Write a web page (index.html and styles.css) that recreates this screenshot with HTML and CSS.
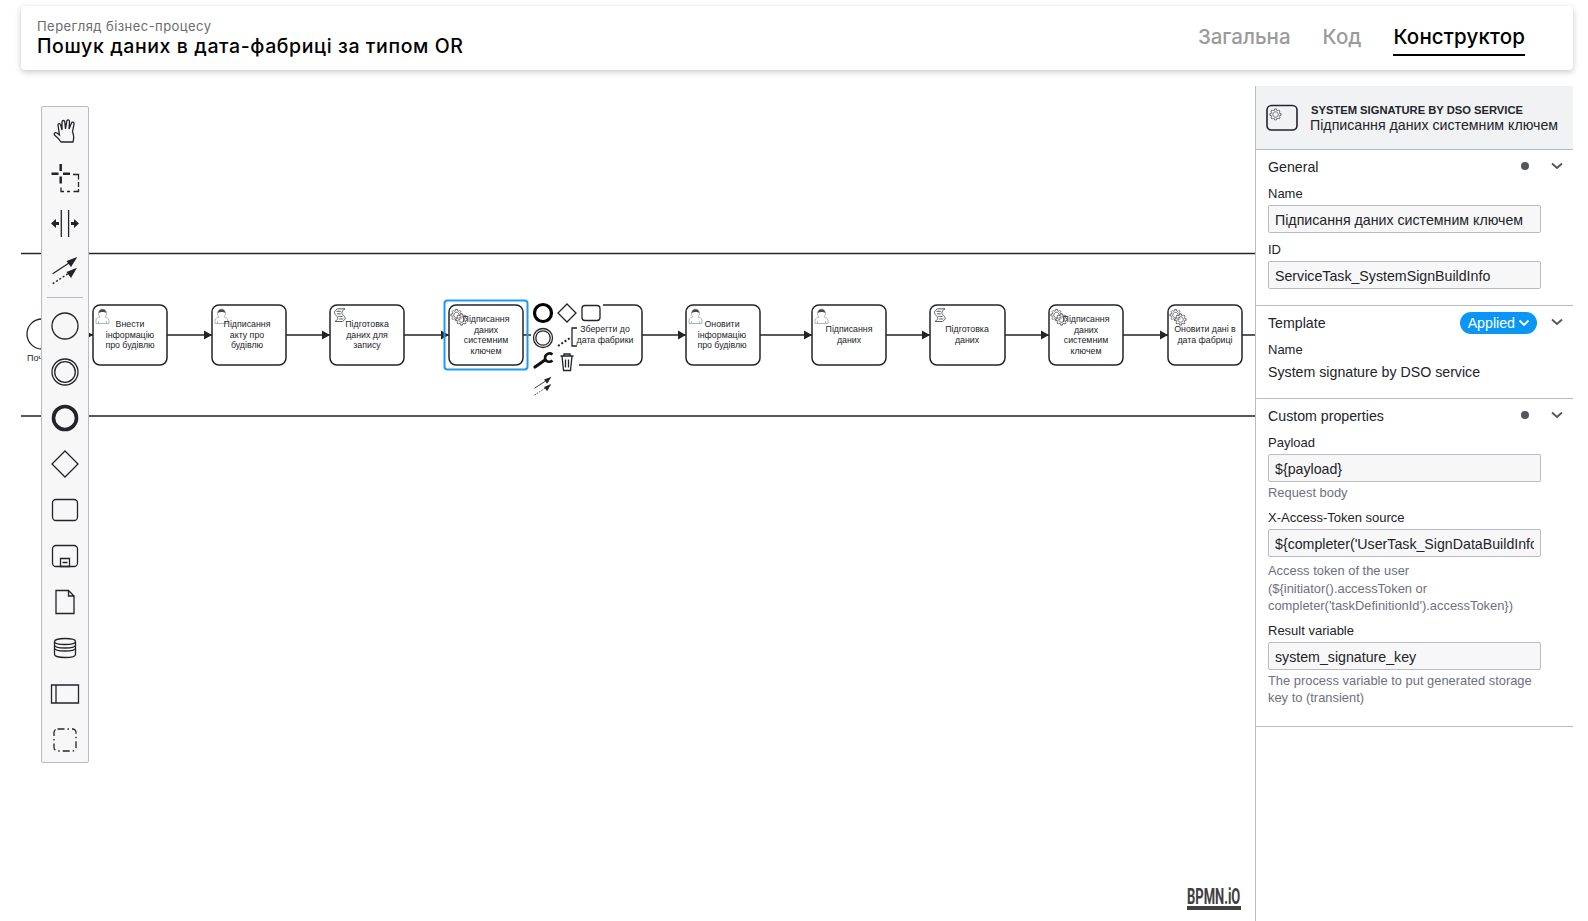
FILE: index.html
```
<!DOCTYPE html>
<html lang="uk">
<head>
  <meta charset="UTF-8">
  <title>Пошук даних в дата-фабриці за типом OR</title>
  <link rel="stylesheet" href="styles.css">
</head>
<body>
  <svg class="icon-defs">
    <symbol id="i-connect" viewBox="0 0 32 32">
      <path d="M3.7 20.7 20 10" fill="none" stroke="#22242a" stroke-width="1.300"/>
      <path d="M3.7 30.7l16-10.500" fill="none" stroke="#22242a" stroke-width="1.400" stroke-dasharray="2 2"/>
      <path d="M28.300 4 17.500 8l4.500 6zM28 14.700 17.500 19l4.500 6z" fill="#22242a"/>
    </symbol>
    <symbol id="i-user" viewBox="0 0 15 16">
      <path d="M1 15.500V12c0-1.800 2.600-2.600 4-3.200C3.800 7.800 3.400 6.300 3.500 5 3.700 2.500 5.400 1.200 7.500 1.200S11.300 2.500 11.500 5c.1 1.300-.3 2.800-1.500 3.800 1.400.6 4 1.400 4 3.200v3.500z" fill="#fff" stroke="#a9abb0" stroke-width=".9"/>
      <path d="M3.700 5C3.800 2.500 5.400 1.200 7.500 1.200S11.200 2.500 11.300 5C9.500 3.800 6 3.500 3.700 5z" fill="#45474d"/>
      <path d="M3.500 15.500V13M11.500 15.500V13" stroke="#a9abb0" stroke-width=".8"/>
    </symbol>
    <symbol id="i-script" viewBox="0 0 15 16">
      <g transform="translate(8.500 14.500) scale(.85)" fill="none" stroke="#55575d" stroke-width="1.150">
        <path d="M0 0c9.967-6.273-8.001-7.919 2.969-14.938h-8.803c-10.970 7.019 6.998 8.665-2.969 14.938z"/>
        <path d="M-7-12h5M-6.500-9h4.500M-5-6h5M-4-3h5"/>
      </g>
    </symbol>
    <symbol id="i-gear" viewBox="0 0 18 18">
      <path id="gear-path" d="M9.500 17.500v-1.713c.352-.071.704-.178 1.048-.321.344-.145.666-.321.966-.521l1.194 1.180 1.567-1.577-1.195-1.180c.403-.614.683-1.299.825-2.018l1.622-.010v-2.220l-1.637.010c-.073-.352-.178-.700-.323-1.044-.145-.344-.321-.664-.523-.962l1.131-1.136-1.583-1.563-1.130 1.136c-.614-.401-1.303-.681-2.023-.822l.009-1.619h-2.241l.004 1.631c-.354.074-.705.180-1.050.324-.344.144-.665.321-.964.520l-1.170-1.158-1.567 1.579 1.168 1.157c-.403.613-.683 1.298-.825 2.017l-1.659.003v2.222l1.673-.006c.073.351.180.702.324 1.045.145.344.321.664.523.961l-1.200 1.197 1.584 1.560 1.196-1.193c.614.403 1.303.682 2.023.823l.001 1.699h2.227zm.221-3.996c-1.789.750-3.858-.093-4.610-1.874-.752-1.783.091-3.846 1.880-4.596 1.788-.749 3.857.093 4.609 1.874.752 1.782-.091 3.846-1.879 4.596z" fill="#fff" stroke="#55575d" stroke-width="1.100"/>
    </symbol>
    <symbol id="i-gears" viewBox="0 0 24 22">
      <use href="#gear-path" transform="scale(.78)"/>
      <use href="#gear-path" transform="translate(5 4.500) scale(.78)"/>
    </symbol>
  </svg>

  <header class="page-head">
    <div class="page-title">
      <div class="page-title-sub">Перегляд бізнес-процесу</div>
      <div class="page-title-main">Пошук даних в дата-фабриці за типом OR</div>
    </div>
    <nav class="tabs">
      <a class="tab">Загальна</a>
      <a class="tab">Код</a>
      <a class="tab tab-active">Конструктор</a>
    </nav>
  </header>

  <main class="workspace">
    <div class="canvas">
      <svg class="diagram" width="1234" height="835" viewBox="21 86 1234 835">
        <g class="lane-lines">
          <path d="M21 253.500H1255M21 416H1255"/>
        </g>

        <circle class="shape" cx="42" cy="334" r="15"/>
        <text class="label-start" x="27" y="361">Початок</text>

        <g class="flows">
          <path d="M60 335H93M167 335H212M286 335H330M404 335H449M523 335H568M642 335H686M760 335H812M886 335H930M1005 335H1049M1123 335H1168M1242 335H1255"/>
        </g>
        <g class="heads">
          <path d="M93 335l-7-4v8zM212 335l-8-4.500v9zM330 335l-8-4.500v9zM449 335l-8-4.500v9zM686 335l-8-4.500v9zM812 335l-8-4.500v9zM930 335l-8-4.500v9zM1049 335l-8-4.500v9zM1168 335l-8-4.500v9z"/>
        </g>

        <rect class="task" x="93" y="305" width="74" height="60" rx="7"/>
        <use href="#i-user" x="95" y="308" width="15" height="16"/>
        <text class="task-text" x="130"><tspan x="130" y="327">Внести</tspan><tspan x="130" y="338">інформацію</tspan><tspan x="130" y="348">про будівлю</tspan></text>

        <rect class="task" x="212" y="305" width="74" height="60" rx="7"/>
        <use href="#i-user" x="214" y="308" width="15" height="16"/>
        <text class="task-text"><tspan x="247" y="327">Підписання</tspan><tspan x="247" y="338">акту про</tspan><tspan x="247" y="348">будівлю</tspan></text>

        <rect class="task" x="330" y="305" width="74" height="60" rx="7"/>
        <use href="#i-script" x="334" y="307" width="15" height="16"/>
        <text class="task-text"><tspan x="367" y="327">Підготовка</tspan><tspan x="367" y="338">даних для</tspan><tspan x="367" y="348">запису</tspan></text>

        <rect class="task" x="449" y="305" width="74" height="60" rx="7"/>
        <use href="#i-gears" x="450" y="307" width="24" height="22"/>
        <text class="task-text"><tspan x="486" y="322">Підписання</tspan><tspan x="486" y="333">даних</tspan><tspan x="486" y="343">системним</tspan><tspan x="486" y="354">ключем</tspan></text>
        <rect class="selection" x="444.500" y="300.500" width="83" height="69" rx="3"/>

        <rect class="task" x="568" y="305" width="74" height="60" rx="7"/>

        <!-- context pad of the selected task -->
        <g class="pad">
          <rect class="pad-bg" x="531" y="301" width="72" height="24"/>
          <rect class="pad-bg" x="531" y="325" width="48" height="72"/>
          <circle class="pad-thick" cx="543" cy="313" r="8.500"/>
          <path class="shape" d="M567 304l9 9-9 9-9-9z"/>
          <rect class="shape" x="582" y="305.500" width="18" height="15" rx="3"/>
          <circle class="shape" cx="543" cy="338" r="9.500"/>
          <circle class="shape" cx="543" cy="338" r="7.200"/>
          <path class="dots" d="M558 346l12-8"/>
          <path class="shape" d="M577 328h-5v18h5"/>
          <path class="wrench" d="M535 367l10-7"/>
          <path class="wrench-jaw" d="M552.500 354.500c-3-2.300-7.500-.5-7.500 3.500 0 3.500 4.500 5 7.500 2.500"/>
          <g class="shape">
            <path d="M560.500 356h13M564 356v-2h6v2M562 356l1.500 14.500h7l1.500-14.500M565.500 359.500v8M568.500 359.500v8"/>
          </g>
          <use href="#i-connect" x="532" y="374" width="22" height="22"/>
        </g>
        <text class="task-text"><tspan x="605" y="332">Зберегти до</tspan><tspan x="605" y="343">дата фабрики</tspan></text>

        <rect class="task" x="686" y="305" width="74" height="60" rx="7"/>
        <use href="#i-user" x="688" y="308" width="15" height="16"/>
        <text class="task-text"><tspan x="722" y="327">Оновити</tspan><tspan x="722" y="338">інформацію</tspan><tspan x="722" y="348">про будівлю</tspan></text>

        <rect class="task" x="812" y="305" width="74" height="60" rx="7"/>
        <use href="#i-user" x="814" y="308" width="15" height="16"/>
        <text class="task-text"><tspan x="849" y="332">Підписання</tspan><tspan x="849" y="343">даних</tspan></text>

        <rect class="task" x="930" y="305" width="75" height="60" rx="7"/>
        <use href="#i-script" x="934" y="307" width="15" height="16"/>
        <text class="task-text"><tspan x="967" y="332">Підготовка</tspan><tspan x="967" y="343">даних</tspan></text>

        <rect class="task" x="1049" y="305" width="74" height="60" rx="7"/>
        <use href="#i-gears" x="1050" y="307" width="24" height="22"/>
        <text class="task-text"><tspan x="1086" y="322">Підписання</tspan><tspan x="1086" y="333">даних</tspan><tspan x="1086" y="343">системним</tspan><tspan x="1086" y="354">ключем</tspan></text>

        <rect class="task" x="1168" y="305" width="74" height="60" rx="7"/>
        <use href="#i-gears" x="1169" y="307" width="24" height="22"/>
        <text class="task-text"><tspan x="1205" y="332">Оновити дані в</tspan><tspan x="1205" y="343">дата фабриці</tspan></text>
      </svg>

      <div class="palette">
        <div class="palette-entry">
          <svg viewBox="0 0 32 32"><path class="tool" d="M12 27C10 24 8 22 5.500 20 4.500 18.500 6 17 8 18l2.500 2L9 10c0-1.500 2-2 2.700 0l1.300 5V7c0-2 2.500-2 2.800 0l.7 7 1.300-8c.4-1.800 2.700-1.500 2.700.5l-.5 7.500 2.500-6c.5-1.500 2.700-1 2.500 1l-1.500 8c1 2 1.300 7 .5 10z"/></svg>
        </div>
        <div class="palette-entry">
          <svg viewBox="0 0 32 32"><path class="tool-bold" d="M2.500 12.700h7M14 12.700h7M11.700 3v7M11.700 15.500v7"/><path class="tool" d="M24 13.500h5.500v5M29.500 21v5M29.500 28v2.500h-5M21 30.500h-3M15 30.500h-3v-4"/></svg>
        </div>
        <div class="palette-entry">
          <svg viewBox="0 0 32 32"><path class="tool" d="M12.300 3v27M19.600 3v27"/><path class="tool-fill" d="M2 16.500l5-4.500v3h3v3H7v3zM30 16.500l-5-4.500v3h-3v3h3v3z"/></svg>
        </div>
        <div class="palette-entry">
          <svg><use href="#i-connect"/></svg>
        </div>
        <div class="palette-sep"></div>
        <div class="palette-entry">
          <svg viewBox="0 0 32 32"><circle class="tool" cx="16" cy="16" r="13"/></svg>
        </div>
        <div class="palette-entry">
          <svg viewBox="0 0 32 32"><circle class="tool" cx="16" cy="16" r="13"/><circle class="tool" cx="16" cy="16" r="10.300"/></svg>
        </div>
        <div class="palette-entry">
          <svg viewBox="0 0 32 32"><circle class="tool-thick" cx="16" cy="16" r="11.500"/></svg>
        </div>
        <div class="palette-entry">
          <svg viewBox="0 0 32 32"><path class="tool" d="M16 3l13 13-13 13L3 16z"/></svg>
        </div>
        <div class="palette-entry">
          <svg viewBox="0 0 32 32"><rect class="tool" x="3.500" y="5.500" width="25" height="21" rx="3.500"/></svg>
        </div>
        <div class="palette-entry">
          <svg viewBox="0 0 32 32"><rect class="tool" x="3.500" y="5.500" width="25" height="21" rx="3.500"/><path class="tool" d="M11.500 18.500h9v8h-9zM13.500 22.500h5"/></svg>
        </div>
        <div class="palette-entry">
          <svg viewBox="0 0 32 32"><path class="tool" d="M7 4.500h12.500L25 10v17.500H7zM19.500 4.500V10H25"/></svg>
        </div>
        <div class="palette-entry">
          <svg viewBox="0 0 32 32"><path class="tool" d="M5.500 9.500c0-4 21-4 21 0v13c0 4-21 4-21 0zM5.500 9.500c0 4 21 4 21 0M5.500 13c0 4 21 4 21 0M5.500 16c0 4 21 4 21 0"/></svg>
        </div>
        <div class="palette-entry">
          <svg viewBox="0 0 32 32"><path class="tool" d="M2.500 7h27v18h-27zM7 7v18"/></svg>
        </div>
        <div class="palette-entry">
          <svg viewBox="0 0 32 32"><rect class="tool-dash" x="5" y="5" width="22" height="22" rx="3.500"/></svg>
        </div>
      </div>

      <a class="powered-by">
        <svg width="54" height="29" viewBox="0 0 54 29">
          <text transform="translate(0 23) scale(.59 1)">BPMN.iO</text>
          <rect x="0" y="25" width="54" height="4"/>
        </svg>
      </a>
    </div>

    <aside class="props">
      <div class="props-head">
        <svg class="props-head-icon" width="32" height="27" viewBox="0 0 32 27">
          <rect x="1" y="1.500" width="30" height="24.500" rx="4.500" fill="none" stroke="#22242a" stroke-width="1.600"/>
          <use href="#i-gear" x="3" y="2.500" width="14" height="14"/>
        </svg>
        <div class="props-head-text">
          <div class="props-type">SYSTEM SIGNATURE BY DSO SERVICE</div>
          <div class="props-name">Підписання даних системним ключем</div>
        </div>
      </div>

      <section class="group">
        <div class="group-head">
          <span class="group-title">General</span>
          <span class="group-dot"></span>
          <svg class="chevron" width="16" height="16" viewBox="0 0 16 16"><path d="M3 5.500l5 4.500 5-4.500"/></svg>
        </div>
        <div class="field">
          <label class="field-label">Name</label>
          <input class="field-input" type="text" value="Підписання даних системним ключем">
        </div>
        <div class="field">
          <label class="field-label">ID</label>
          <input class="field-input" type="text" value="ServiceTask_SystemSignBuildInfo">
        </div>
      </section>

      <section class="group">
        <div class="group-head">
          <span class="group-title">Template</span>
          <span class="pill">Applied
            <svg width="12" height="10" viewBox="0 0 12 10"><path d="M1.500 2.500l4.500 4.500 4.500-4.500"/></svg>
          </span>
          <svg class="chevron" width="16" height="16" viewBox="0 0 16 16"><path d="M3 5.500l5 4.500 5-4.500"/></svg>
        </div>
        <div class="field">
          <label class="field-label">Name</label>
          <div class="field-value">System signature by DSO service</div>
        </div>
      </section>

      <section class="group group-last">
        <div class="group-head">
          <span class="group-title">Custom properties</span>
          <span class="group-dot"></span>
          <svg class="chevron" width="16" height="16" viewBox="0 0 16 16"><path d="M3 5.500l5 4.500 5-4.500"/></svg>
        </div>
        <div class="field">
          <label class="field-label">Payload</label>
          <input class="field-input" type="text" value="${payload}">
          <div class="field-desc">Request body</div>
        </div>
        <div class="field">
          <label class="field-label">X-Access-Token source</label>
          <input class="field-input" type="text" value="${completer('UserTask_SignDataBuildInfo').accessToken}">
          <div class="field-desc field-desc-long">Access token of the user<br>(${initiator().accessToken or<br>completer('taskDefinitionId').accessToken})</div>
        </div>
        <div class="field">
          <label class="field-label">Result variable</label>
          <input class="field-input" type="text" value="system_signature_key">
          <div class="field-desc">The process variable to put generated storage<br>key to (transient)</div>
        </div>
      </section>
    </aside>
  </main>
</body>
</html>
```

FILE: styles.css
```
html, body {
  height: 100%;
}

body {
  margin: 0;
  display: flex;
  flex-direction: column;
  overflow: hidden;
  background-color: #fff;
  color: #22242a;
  font-family: "Liberation Sans", Arial, sans-serif;
}

.icon-defs {
  display: none;
}

/* page header */
.page-head {
  display: flex;
  justify-content: space-between;
  align-items: center;
  height: 64px;
  margin: 6px 15px 0 21px;
  padding: 0 48px 0 16px;
  flex-shrink: 0;
  background-color: #fff;
  border-radius: 4px;
  box-shadow: 0 2px 6px rgba(0, 0, 0, 0.22);
  font-family: Inter, "Noto Sans", sans-serif;
  position: relative;
  z-index: 2;
}

.page-title {
  margin-top: -1px;
}

.page-title-sub {
  font-size: 13px;
  line-height: 16px;
  letter-spacing: 0.45px;
  color: #6b6b6b;
}

.page-title-main {
  font-size: 19.5px;
  line-height: 24px;
  letter-spacing: 0.6px;
  font-weight: 500;
  color: #000;
}

.tabs {
  display: flex;
  gap: 32px;
  align-self: flex-start;
  padding-top: 17px;
}

.tab {
  height: 33px;
  font-size: 20.5px;
  line-height: 28px;
  font-weight: 500;
  color: #9b9b9b;
}

.tab-active {
  color: #000;
  letter-spacing: 0.15px;
  border-bottom: 2px solid #000;
  box-sizing: border-box;
}

/* workspace */
.workspace {
  display: flex;
  flex: 1;
  min-height: 0;
  margin: 16px 15px 0 21px;
}

.canvas {
  position: relative;
  flex: 1;
  overflow: hidden;
}

.diagram {
  position: absolute;
  left: 0;
  top: 0;
}

.diagram text {
  font-family: "Liberation Sans", Arial, sans-serif;
}

.lane-lines path {
  fill: none;
  stroke: #22242a;
  stroke-width: 1.5;
}

.flows path {
  fill: none;
  stroke: #22242a;
  stroke-width: 1.5;
}

.heads path {
  fill: #22242a;
}

.task {
  fill: #fff;
  stroke: #22242a;
  stroke-width: 1.5;
}

.task-text {
  font-size: 8.8px;
  fill: #22242a;
  text-anchor: middle;
}

.label-start {
  font-size: 9px;
  fill: #22242a;
}

.shape {
  fill: none;
  stroke: #22242a;
  stroke-width: 1.3;
}

.selection {
  fill: none;
  stroke: #1d9bf0;
  stroke-width: 2;
}

.pad-bg {
  fill: #fff;
}

.pad-thick {
  fill: none;
  stroke: #000;
  stroke-width: 3.2;
}

.dots {
  fill: none;
  stroke: #22242a;
  stroke-width: 2;
  stroke-dasharray: 2 2;
}

.wrench {
  fill: none;
  stroke: #111;
  stroke-width: 3.2;
  stroke-linecap: round;
}

.wrench-jaw {
  fill: none;
  stroke: #111;
  stroke-width: 2.6;
}

/* tool palette */
.palette {
  position: absolute;
  left: 20px;
  top: 20px;
  width: 46px;
  height: 654px;
  padding-top: 1px;
  background-color: #f7f7f8;
  border: 1px solid #b9bcc6;
  border-radius: 2px;
}

.palette-entry {
  display: flex;
  justify-content: center;
  align-items: center;
  height: 46px;
}

.palette-entry svg {
  width: 32px;
  height: 32px;
}

.palette-sep {
  height: 1px;
  margin: 5px 5px 5px;
  background-color: #b9bcc6;
}

.tool {
  fill: none;
  stroke: #22242a;
  stroke-width: 1.3;
}

.tool-bold {
  fill: none;
  stroke: #22242a;
  stroke-width: 2.5;
}

.tool-fill {
  fill: #22242a;
}

.tool-thick {
  fill: none;
  stroke: #22242a;
  stroke-width: 3.6;
}

.tool-dash {
  fill: none;
  stroke: #22242a;
  stroke-width: 1.3;
  stroke-dasharray: 7 3 1.5 3;
}

.powered-by {
  position: absolute;
  right: 14px;
  bottom: 11px;
  display: block;
}

.powered-by svg {
  display: block;
}

.powered-by text {
  font-family: Roboto, "Liberation Sans", sans-serif;
  font-size: 22px;
  font-weight: 700;
  fill: #404040;
}

.powered-by rect {
  fill: #404040;
}

/* properties panel */
.props {
  width: 318px;
  flex-shrink: 0;
  box-sizing: border-box;
  border-left: 1px solid #b9bcc6;
  background-color: #fff;
  font-size: 14.2px;
}

.props-head {
  display: flex;
  align-items: center;
  gap: 12px;
  height: 63px;
  padding-left: 10px;
  background-color: #f1f2f4;
  border-bottom: 1px solid #b9bcc6;
}

.props-head-icon {
  flex-shrink: 0;
}

.props-type {
  font-size: 11.2px;
  line-height: 16px;
  font-weight: 700;
  padding-left: 1px;
}

.props-name {
  line-height: 15px;
}

.group {
  padding: 0 32px 16px 12px;
  border-bottom: 1px solid #b9bcc6;
}

.group-last {
  padding-bottom: 20px;
}

.group-head {
  display: flex;
  align-items: center;
  height: 34px;
  margin-right: -24px;
  position: relative;
}

.group-title {
  flex: 1;
}

.group-dot {
  width: 8px;
  height: 8px;
  margin-top: -2px;
  margin-right: 20px;
  border-radius: 50%;
  background-color: #52555f;
}

.chevron {
  margin-top: -2px;
}

.chevron path {
  fill: none;
  stroke: #52555f;
  stroke-width: 1.8;
}

.pill {
  display: flex;
  align-items: center;
  gap: 3px;
  height: 22px;
  margin-right: 12px;
  padding: 0 7px 0 8px;
  border-radius: 11px;
  background-color: #0a96f5;
  color: #fff;
}

.pill path {
  fill: none;
  stroke: #fff;
  stroke-width: 1.8;
}

.field {
  margin-bottom: 7px;
}

.field:last-child {
  margin-bottom: 0;
}

.field-label {
  display: block;
  margin-bottom: 1px;
  font-size: 13px;
  line-height: 20px;
}

.field-input {
  display: block;
  width: 273px;
  height: 28px;
  margin: 0;
  padding: 2px 6px 0;
  box-sizing: border-box;
  background-color: #f7f7f8;
  border: 1px solid #b9bcc6;
  border-radius: 2px;
  color: #22242a;
  font-family: "Liberation Sans", Arial, sans-serif;
  font-size: 14.2px;
}

.field-value {
  line-height: 22px;
  margin-bottom: -1px;
}

.field-desc {
  margin-top: 2px;
  font-size: 12.9px;
  line-height: 17px;
  color: #6d7080;
}

.field-desc-long {
  margin-top: 5px;
  margin-bottom: -0.5px;
  line-height: 17.5px;
}
```
